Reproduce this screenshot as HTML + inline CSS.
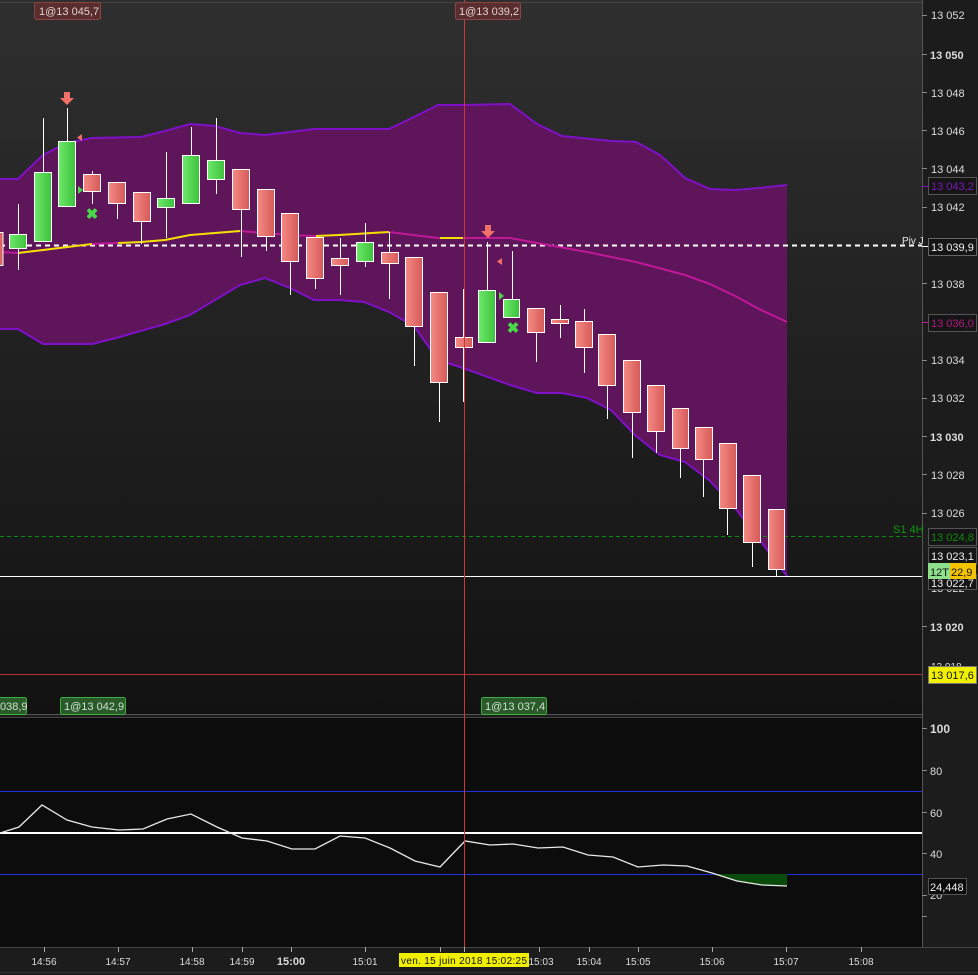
<!DOCTYPE html>
<html><head><meta charset="utf-8"><style>
html,body{margin:0;padding:0;background:#1a1a1a;}
svg{display:block;font-family:"Liberation Sans",sans-serif;}
</style></head><body>
<svg width="978" height="975" viewBox="0 0 978 975" xmlns="http://www.w3.org/2000/svg">
<defs>
<linearGradient id="bg" x1="0" y1="0" x2="0" y2="1"><stop offset="0" stop-color="#2f2f2f"/><stop offset="1" stop-color="#121212"/></linearGradient>
<linearGradient id="rd" x1="0" y1="0" x2="1" y2="0"><stop offset="0" stop-color="#f58a84"/><stop offset="1" stop-color="#d45a58"/></linearGradient>
<linearGradient id="gr" x1="0" y1="0" x2="1" y2="0"><stop offset="0" stop-color="#6ee86a"/><stop offset="1" stop-color="#3cc23c"/></linearGradient>
</defs>
<rect x="0" y="0" width="978" height="975" fill="#1c1c1c"/>
<rect x="0" y="0" width="922" height="714" fill="url(#bg)"/>
<rect x="0" y="718" width="922" height="229" fill="#0c0c0c"/>
<line x1="0" y1="714.5" x2="922" y2="714.5" stroke="#555" stroke-width="1"/>
<line x1="0" y1="717.5" x2="922" y2="717.5" stroke="#444" stroke-width="1"/>
<line x1="922.5" y1="0" x2="922.5" y2="947" stroke="#555"/>
<line x1="0" y1="947.5" x2="978" y2="947.5" stroke="#444"/>
<line x1="0" y1="2.5" x2="922" y2="2.5" stroke="#444"/>

<!-- band fill -->
<polygon fill="#5e1559" points="0,179 18,179 43,155 67,143 92,138 141,137 165,131 190,124 215,126 240,133 265,135 290,132 314,129 339,129 389,129 414,117 438,105 463,105 510,104 537,124 562,136 611,141 636,142 660,155 685,178 710,189 735,190 759,188 787,185 787,576 759,539 735,508 710,481 685,462 660,455 636,436 611,410 587,398 562,393 537,393 510,385 463,368 438,360 414,326 389,312 364,302 339,300 314,300 290,288 265,278 240,285 190,315 165,324 116,338 92,344 43,344 18,329 0,329"/>
<polyline fill="none" stroke="#8010c8" stroke-width="2" points="0,179 18,179 43,155 67,143 92,138 141,137 165,131 190,124 215,126 240,133 265,135 290,132 314,129 339,129 389,129 414,117 438,105 463,105 510,104 537,124 562,136 611,141 636,142 660,155 685,178 710,189 735,190 759,188 787,185"/>
<polyline fill="none" stroke="#8010c8" stroke-width="2" points="0,329 18,329 43,344 92,344 116,338 165,324 190,315 240,285 265,278 290,288 314,300 339,300 364,302 389,312 414,326 438,360 463,368 510,385 537,393 562,393 587,398 611,410 636,436 660,455 685,462 710,481 735,508 759,539 787,576"/>

<!-- horizontal lines -->
<line x1="0" y1="245.5" x2="922" y2="245.5" stroke="#fff" stroke-width="2" stroke-dasharray="5,4"/>
<line x1="0" y1="536.5" x2="922" y2="536.5" stroke="#0c8a0c" stroke-dasharray="4,3"/>
<line x1="0" y1="576.5" x2="922" y2="576.5" stroke="#fff"/>
<line x1="0" y1="674.5" x2="922" y2="674.5" stroke="#b83030"/>

<!-- middle line -->
<polyline fill="none" stroke="#c01898" stroke-width="2" points="0,252 18,253 43,250 92,244 141,242 165,240 190,235 240,231 290,235 314,236 339,235 389,232 438,238 463,238 510,238 537,243 587,252 636,262 685,275 710,284 735,296 759,309 787,322"/>
<polyline fill="none" stroke="#f0e000" stroke-width="2" points="18,253 43,250 92,244"/>
<polyline fill="none" stroke="#f0e000" stroke-width="2" points="118,243 141,242 165,240 190,235 240,231"/>
<polyline fill="none" stroke="#f0e000" stroke-width="2" points="316,236 339,235 389,232"/>
<polyline fill="none" stroke="#f0e000" stroke-width="2" points="440,238 463,238"/>

<!-- candles -->
<g stroke="#fff" stroke-width="1">
<line x1="18.5" y1="204" x2="18.5" y2="270"/><rect x="9.5" y="234.5" width="17" height="14" fill="url(#gr)"/>
<line x1="43.5" y1="118" x2="43.5" y2="172"/><rect x="34.5" y="172.5" width="17" height="69" fill="url(#gr)"/>
<line x1="67.5" y1="108" x2="67.5" y2="141"/><rect x="58.5" y="141.5" width="17" height="65" fill="url(#gr)"/>
<line x1="92.5" y1="171" x2="92.5" y2="204"/><rect x="83.5" y="174.5" width="17" height="17" fill="url(#rd)"/>
<line x1="117.5" y1="182" x2="117.5" y2="219"/><rect x="108.5" y="182.5" width="17" height="21" fill="url(#rd)"/>
<line x1="141.5" y1="192" x2="141.5" y2="244"/><rect x="133.5" y="192.5" width="17" height="29" fill="url(#rd)"/>
<line x1="166.5" y1="152" x2="166.5" y2="238"/><rect x="157.5" y="198.5" width="17" height="9" fill="url(#gr)"/>
<line x1="191.5" y1="127" x2="191.5" y2="203"/><rect x="182.5" y="155.5" width="17" height="48" fill="url(#gr)"/>
<line x1="216.5" y1="118" x2="216.5" y2="194"/><rect x="207.5" y="160.5" width="17" height="19" fill="url(#gr)"/>
<line x1="241.5" y1="169" x2="241.5" y2="257"/><rect x="232.5" y="169.5" width="17" height="40" fill="url(#rd)"/>
<line x1="266.5" y1="189" x2="266.5" y2="251"/><rect x="257.5" y="189.5" width="17" height="47" fill="url(#rd)"/>
<line x1="290.5" y1="213" x2="290.5" y2="295"/><rect x="281.5" y="213.5" width="17" height="48" fill="url(#rd)"/>
<line x1="315.5" y1="237" x2="315.5" y2="289"/><rect x="306.5" y="237.5" width="17" height="41" fill="url(#rd)"/>
<line x1="340.5" y1="238" x2="340.5" y2="295"/><rect x="331.5" y="258.5" width="17" height="7" fill="url(#rd)"/>
<line x1="365.5" y1="223" x2="365.5" y2="267"/><rect x="356.5" y="242.5" width="17" height="19" fill="url(#gr)"/>
<line x1="389.5" y1="232" x2="389.5" y2="299"/><rect x="381.5" y="252.5" width="17" height="11" fill="url(#rd)"/>
<line x1="414.5" y1="257" x2="414.5" y2="366"/><rect x="405.5" y="257.5" width="17" height="69" fill="url(#rd)"/>
<line x1="439.5" y1="292" x2="439.5" y2="422"/><rect x="430.5" y="292.5" width="17" height="90" fill="url(#rd)"/>
<line x1="463.5" y1="289" x2="463.5" y2="402"/><rect x="455.5" y="337.5" width="17" height="10" fill="url(#rd)"/>
<line x1="487.5" y1="242" x2="487.5" y2="290"/><rect x="478.5" y="290.5" width="17" height="52" fill="url(#gr)"/>
<line x1="512.5" y1="251" x2="512.5" y2="318"/><rect x="503.5" y="299.5" width="16" height="18" fill="url(#gr)"/>
<line x1="536.5" y1="308" x2="536.5" y2="362"/><rect x="527.5" y="308.5" width="17" height="24" fill="url(#rd)"/>
<line x1="560.5" y1="305" x2="560.5" y2="338"/><rect x="551.5" y="319.5" width="17" height="4" fill="url(#rd)"/>
<line x1="584.5" y1="309" x2="584.5" y2="373"/><rect x="575.5" y="321.5" width="17" height="26" fill="url(#rd)"/>
<line x1="607.5" y1="334" x2="607.5" y2="419"/><rect x="598.5" y="334.5" width="17" height="51" fill="url(#rd)"/>
<line x1="632.5" y1="360" x2="632.5" y2="458"/><rect x="623.5" y="360.5" width="17" height="52" fill="url(#rd)"/>
<line x1="656.5" y1="385" x2="656.5" y2="453"/><rect x="647.5" y="385.5" width="17" height="46" fill="url(#rd)"/>
<line x1="680.5" y1="408" x2="680.5" y2="478"/><rect x="672.5" y="408.5" width="16" height="40" fill="url(#rd)"/>
<line x1="703.5" y1="427" x2="703.5" y2="497"/><rect x="695.5" y="427.5" width="17" height="32" fill="url(#rd)"/>
<line x1="727.5" y1="443" x2="727.5" y2="535"/><rect x="719.5" y="443.5" width="17" height="65" fill="url(#rd)"/>
<line x1="752.5" y1="475" x2="752.5" y2="567"/><rect x="743.5" y="475.5" width="17" height="67" fill="url(#rd)"/>
<line x1="776.5" y1="509" x2="776.5" y2="576"/><rect x="768.5" y="509.5" width="16" height="60" fill="url(#rd)"/>
<rect x="-6" y="232.5" width="9" height="33" fill="url(#rd)"/>
</g>

<!-- red vertical cursor -->
<line x1="464.5" y1="0" x2="464.5" y2="947" stroke="#c83a3a"/>

<!-- markers -->
<path d="M64,92 h6 v6 h4 l-7,7 l-7,-7 h4 z" fill="#f07068"/>
<path d="M485,225 h6 v6 h4 l-7,7 l-7,-7 h4 z" fill="#f07068"/>
<path d="M82,134 l-5,3.5 l5,3.5 z" fill="#f07068"/>
<path d="M502,258 l-5,3.5 l5,3.5 z" fill="#f07068"/>
<path d="M78,186 l5,4 l-5,4 z" fill="#4ad84a"/>
<path d="M499,292 l5,4 l-5,4 z" fill="#4ad84a"/>
<text x="92" y="219" fill="#4ad84a" font-size="15" font-weight="bold" text-anchor="middle">✖</text>
<text x="513" y="333" fill="#4ad84a" font-size="15" font-weight="bold" text-anchor="middle">✖</text>

<!-- order labels -->
<g font-size="11">
<rect x="34.5" y="2.5" width="66" height="17" rx="2" fill="#5a2e2e" stroke="#8a4444"/>
<text x="39" y="15" fill="#e0d0d0">1@13 045,7</text>
<rect x="455.5" y="2.5" width="65" height="17" rx="2" fill="#5a2e2e" stroke="#8a4444"/>
<text x="459" y="15" fill="#e0d0d0">1@13 039,2</text>
<rect x="-5.5" y="697.5" width="32" height="17" rx="2" fill="#2a5a2a" stroke="#3cb03c"/>
<text x="0" y="710" fill="#d0e0d0">038,9</text>
<rect x="60.5" y="697.5" width="65" height="17" rx="2" fill="#2a5a2a" stroke="#3cb03c"/>
<text x="64" y="710" fill="#d0e0d0">1@13 042,9</text>
<rect x="481.5" y="697.5" width="65" height="17" rx="2" fill="#2a5a2a" stroke="#3cb03c"/>
<text x="485" y="710" fill="#d0e0d0">1@13 037,4</text>
<text x="902" y="244" fill="#e8e8e8" font-size="10">Piv J</text>
<text x="893" y="533" fill="#0c9a0c" font-size="11">S1 4H</text>
</g>

<!-- right axis -->
<g font-size="11" fill="#dcdcdc">
<g stroke="#888">
<line x1="922" y1="15.5" x2="927" y2="15.5"/><line x1="922" y1="54.5" x2="927" y2="54.5"/><line x1="922" y1="92.5" x2="927" y2="92.5"/><line x1="922" y1="130.5" x2="927" y2="130.5"/><line x1="922" y1="168.5" x2="927" y2="168.5"/><line x1="922" y1="207.5" x2="927" y2="207.5"/><line x1="922" y1="283.5" x2="927" y2="283.5"/><line x1="922" y1="360.5" x2="927" y2="360.5"/><line x1="922" y1="398.5" x2="927" y2="398.5"/><line x1="922" y1="436.5" x2="927" y2="436.5"/><line x1="922" y1="474.5" x2="927" y2="474.5"/><line x1="922" y1="513.5" x2="927" y2="513.5"/><line x1="922" y1="626.5" x2="927" y2="626.5"/>
</g>
<text x="931" y="19">13 052</text>
<text x="930" y="59" font-weight="bold">13 050</text>
<text x="931" y="97">13 048</text>
<text x="931" y="135">13 046</text>
<text x="931" y="173">13 044</text>
<text x="931" y="211">13 042</text>
<text x="931" y="288">13 038</text>
<text x="931" y="364">13 034</text>
<text x="931" y="402">13 032</text>
<text x="930" y="441" font-weight="bold">13 030</text>
<text x="931" y="479">13 028</text>
<text x="931" y="517">13 026</text>
<text x="930" y="631" font-weight="bold">13 020</text>
<text x="931" y="670" font-size="10">13 018</text>
<text x="931" y="592">13 022</text>
</g>
<g font-size="11">
<line x1="922" y1="186.5" x2="928" y2="186.5" stroke="#8010c8"/>
<rect x="928.5" y="177.5" width="48" height="17" fill="#151515" stroke="#555"/><text x="931" y="190" fill="#7a18b8">13 043,2</text>
<line x1="922" y1="246.5" x2="928" y2="246.5" stroke="#fff"/>
<rect x="928.5" y="238.5" width="48" height="17" fill="#151515" stroke="#666"/><text x="931" y="251" fill="#f0f0f0">13 039,9</text>
<line x1="922" y1="322.5" x2="928" y2="322.5" stroke="#c01898"/>
<rect x="928.5" y="314.5" width="48" height="17" fill="#151515" stroke="#555"/><text x="931" y="327" fill="#b01880">13 036,0</text>
<rect x="928.5" y="528.5" width="48" height="17" fill="#151515" stroke="#555"/><text x="931" y="541" fill="#0c8a0c">13 024,8</text>
<rect x="928.5" y="547.5" width="48" height="17" fill="#151515" stroke="#555"/><text x="931" y="560" fill="#f0f0f0">13 023,1</text>
<rect x="928.5" y="574.5" width="48" height="15" fill="#151515" stroke="#555"/><text x="931" y="587" fill="#f0f0f0">13 022,7</text>
<rect x="928" y="563" width="22" height="16" fill="#8ee08a"/><text x="930" y="576" fill="#111">12T</text>
<rect x="950" y="563" width="26" height="16" fill="#f5c400"/><text x="951" y="576" fill="#111">22,9</text>
<rect x="928.5" y="666.5" width="48" height="17" fill="#f0f000" stroke="#777"/><text x="931" y="679" fill="#111">13 017,6</text>
</g>

<!-- bottom panel -->
<line x1="0" y1="791.5" x2="922" y2="791.5" stroke="#2030e0"/>
<line x1="0" y1="874.5" x2="922" y2="874.5" stroke="#2030e0"/>
<line x1="0" y1="833" x2="922" y2="833" stroke="#fff" stroke-width="2"/>
<polygon fill="#0a4a0a" points="712,874 737,881 762,885 787,886 787,874"/>
<polyline fill="none" stroke="#e8e8e8" stroke-width="1.3" points="0,833 19,827 42,805 67,820 92,827 119,830 143,829 167,819 191,814 217,827 242,838 267,841 292,849 315,849 340,836 365,838 390,848 415,861 440,867 465,841 490,845 513,844 538,848 563,847 588,855 613,857 638,867 663,865 687,866 712,873 737,881 762,885 787,886"/>
<line x1="464.5" y1="718" x2="464.5" y2="947" stroke="#c83a3a"/>
<g font-size="11" fill="#dcdcdc">
<g stroke="#888"><line x1="922" y1="728.5" x2="927" y2="728.5"/><line x1="922" y1="770.5" x2="927" y2="770.5"/><line x1="922" y1="812.5" x2="927" y2="812.5"/><line x1="922" y1="853.5" x2="927" y2="853.5"/><line x1="922" y1="895.5" x2="927" y2="895.5"/><line x1="922" y1="916.5" x2="927" y2="916.5"/></g>
<text x="930" y="733" font-weight="bold" font-size="12">100</text>
<text x="930" y="775">80</text>
<text x="930" y="817">60</text>
<text x="930" y="858">40</text>
<text x="930" y="899">20</text>
<rect x="928.5" y="878.5" width="38" height="16" fill="#0c0c0c" stroke="#555"/><text x="930" y="891" fill="#f0f0f0">24,448</text>
</g>

<!-- time axis -->
<g stroke="#aaa"><line x1="44.5" y1="947" x2="44.5" y2="952"/><line x1="118.5" y1="947" x2="118.5" y2="952"/><line x1="192.5" y1="947" x2="192.5" y2="952"/><line x1="242.5" y1="947" x2="242.5" y2="952"/><line x1="291.5" y1="947" x2="291.5" y2="952"/><line x1="365.5" y1="947" x2="365.5" y2="952"/><line x1="440.5" y1="947" x2="440.5" y2="952"/><line x1="464.5" y1="947" x2="464.5" y2="952"/><line x1="539.5" y1="947" x2="539.5" y2="952"/><line x1="589.5" y1="947" x2="589.5" y2="952"/><line x1="638.5" y1="947" x2="638.5" y2="952"/><line x1="712.5" y1="947" x2="712.5" y2="952"/><line x1="786.5" y1="947" x2="786.5" y2="952"/><line x1="861.5" y1="947" x2="861.5" y2="952"/></g>
<g font-size="10" fill="#dcdcdc" text-anchor="middle">
<text x="44" y="965">14:56</text><text x="118" y="965">14:57</text><text x="192" y="965">14:58</text><text x="242" y="965">14:59</text>
<text x="291" y="965" font-weight="bold" font-size="11">15:00</text><text x="365" y="965">15:01</text>
<text x="541" y="965">15:03</text><text x="589" y="965">15:04</text><text x="638" y="965">15:05</text><text x="712" y="965">15:06</text><text x="786" y="965">15:07</text><text x="861" y="965">15:08</text>
</g>
<rect x="399" y="953" width="130" height="14" fill="#f0f000"/>
<text x="401" y="964" font-size="10" fill="#111" textLength="126">ven. 15 juin 2018 15:02:25</text>
<line x1="0" y1="972.5" x2="978" y2="972.5" stroke="#333"/>
</svg>
</body></html>
